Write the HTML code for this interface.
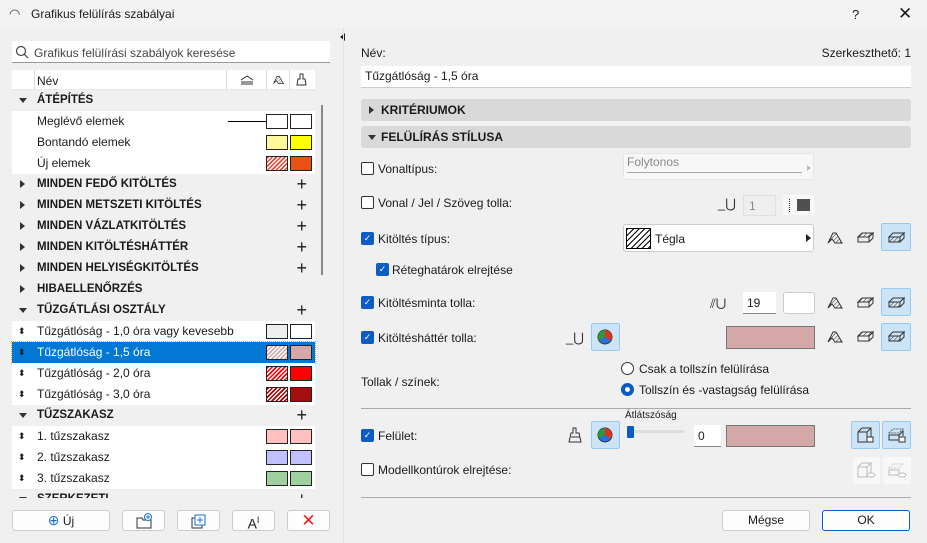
<!DOCTYPE html>
<html><head><meta charset="utf-8"><style>
*{box-sizing:border-box;margin:0;padding:0}
body{width:927px;height:543px;background:#f0f0f0;font-family:"Liberation Sans",sans-serif;font-size:12px;color:#1a1a1a;position:relative;overflow:hidden}
.a{position:absolute}
.tb{left:0;top:0;width:927px;height:28px;background:#f3f3f3}
.row{position:absolute;left:12px;width:303px;height:21px;line-height:21px}
.g{background:#f0f0f0;font-weight:bold;font-size:11.5px}
.i{background:#fff}
.sw{position:absolute;top:3px;width:22px;height:15px;border:1px solid #222}
.tri{position:absolute;left:7px;top:8px;width:0;height:0;border-left:4px solid transparent;border-right:4px solid transparent;border-top:5px solid #333}
.trr{position:absolute;left:8px;top:6px;border-top:4px solid transparent;border-bottom:4px solid transparent;border-left:5px solid #333}
.plus{position:absolute;right:8px;top:0;font-size:18px;font-weight:normal}
.ud{position:absolute;left:6px;top:0;font-size:9px}
.btn{position:absolute;background:#fdfdfd;border:1px solid #ccc;border-radius:3px;text-align:center;line-height:19px}
.cb{position:absolute;width:13px;height:13px;border-radius:2px}
.cb.on{background:#0b5cc4;color:#fff;font-size:9px;line-height:13px;text-align:center}
.cb.off{border:1px solid #333;background:#fff}
.bar{position:absolute;left:361px;width:550px;height:22px;background:#d9d9d9;border-radius:3px;font-weight:bold;line-height:22px;padding-left:20px}
.blue{position:absolute;background:#cce4f7;border:1px solid #99c9ef;border-radius:2px}
.ico{position:absolute;font-size:13px;color:#333}
.inp{position:absolute;background:#fff;border-bottom:1px solid #888;padding-left:4px;line-height:21px}
</style></head><body>
<svg width="0" height="0" style="position:absolute"><defs>
<pattern id="h" width="3" height="3" patternUnits="userSpaceOnUse" patternTransform="rotate(45)"><line x1="0" y1="0" x2="0" y2="3" stroke="#333" stroke-width="1"/></pattern>
<symbol id="i1" viewBox="0 0 18 14"><path d="M2 12 L7 2 L10 2 L16 12 L9 12 L6 8 Z" fill="url(#h)" stroke="#333"/></symbol>
<symbol id="i2" viewBox="0 0 18 14"><path d="M2 6 L6 2 H17 L13 6 Z" fill="url(#h)" stroke="#333"/><path d="M2 6 H13 V11 H2 Z M13 6 L17 2 V7 L13 11" fill="none" stroke="#333"/></symbol>
<symbol id="i3" viewBox="0 0 18 14"><path d="M2 6 L6 2 H17 L13 6 Z M13 6 L17 2 V7 L13 11" fill="none" stroke="#333"/><path d="M2 6 H13 V11 H2 Z" fill="url(#h)" stroke="#333"/></symbol>
</defs></svg>
<div class="a tb"></div>
<div class="a" style="left:9px;top:6px;font-size:13px;color:#444">◠</div>
<div class="a" style="left:31px;top:7px;font-size:12px">Grafikus felülírás szabályai</div>
<div class="a" style="left:852px;top:7px;font-size:13px">?</div>
<div class="a" style="left:898px;top:4px;font-size:17px">✕</div>

<div class="a" style="left:12px;top:41px;width:318px;height:22px;background:#fff;border-bottom:1px solid #999"></div>
<svg class="a" style="left:15px;top:45px" width="14" height="14"><circle cx="6" cy="6" r="4.5" fill="none" stroke="#444" stroke-width="1.2"/><line x1="9.3" y1="9.3" x2="13" y2="13" stroke="#444" stroke-width="1.2"/></svg>
<div class="a" style="left:34px;top:46px;color:#444">Grafikus felülírási szabályok keresése</div>

<div class="a" style="left:12px;top:70px;width:303px;height:20px;background:#fff;border-bottom:1px solid #e8e8e8"></div>
<div class="a" style="left:34px;top:70px;width:1px;height:20px;background:#ddd"></div>
<div class="a" style="left:226px;top:70px;width:1px;height:20px;background:#ddd"></div>
<div class="a" style="left:266px;top:70px;width:1px;height:20px;background:#ddd"></div>
<div class="a" style="left:289px;top:70px;width:1px;height:20px;background:#ddd"></div>
<div class="a" style="left:37px;top:74px">Név</div>
<svg class="a" style="left:240px;top:74px" width="14" height="12"><path d="M1 6 L7 2 L13 6 M1 8 H13 M1 10 H13" fill="none" stroke="#333"/></svg>
<svg class="a" style="left:272px;top:74px" width="13" height="12"><use href="#i1"/></svg>
<svg class="a" style="left:296px;top:73px" width="11" height="13"><path d="M4 1 H7 V6 H9 L10 12 H1 L2 6 H4 Z" fill="none" stroke="#333"/></svg>

<div class="row g" style="top:90px"><span class="tri"></span><span style="margin-left:25px">ÁTÉPÍTÉS</span></div>
<div class="row i" style="top:111px"><span style="margin-left:25px">Meglévő elemek</span><div class="a" style="left:216px;top:10px;width:46px;height:1px;background:#000"></div><div class="sw" style="left:254px;background:#fff"></div><div class="sw" style="left:278px;background:#fff"></div></div>
<div class="row i" style="top:132px"><span style="margin-left:25px">Bontandó elemek</span><div class="sw" style="left:254px;background:#fff59a"></div><div class="sw" style="left:278px;background:#ffff00"></div></div>
<div class="row i" style="top:153px"><span style="margin-left:25px">Új elemek</span><div class="sw" style="left:254px;background:repeating-linear-gradient(135deg,#e54a3a 0 1.5px,#fff 1.5px 3px)"></div><div class="sw" style="left:278px;background:#e85217"></div></div>
<div class="row g" style="top:174px"><span class="trr"></span><span style="margin-left:25px">MINDEN FEDŐ KITÖLTÉS</span><span class="plus">+</span></div>
<div class="row g" style="top:195px"><span class="trr"></span><span style="margin-left:25px">MINDEN METSZETI KITÖLTÉS</span><span class="plus">+</span></div>
<div class="row g" style="top:216px"><span class="trr"></span><span style="margin-left:25px">MINDEN VÁZLATKITÖLTÉS</span><span class="plus">+</span></div>
<div class="row g" style="top:237px"><span class="trr"></span><span style="margin-left:25px">MINDEN KITÖLTÉSHÁTTÉR</span><span class="plus">+</span></div>
<div class="row g" style="top:258px"><span class="trr"></span><span style="margin-left:25px">MINDEN HELYISÉGKITÖLTÉS</span><span class="plus">+</span></div>
<div class="row g" style="top:279px"><span class="trr"></span><span style="margin-left:25px">HIBAELLENŐRZÉS</span></div>
<div class="row g" style="top:300px"><span class="tri"></span><span style="margin-left:25px">TŰZGÁTLÁSI OSZTÁLY</span><span class="plus">+</span></div>
<div class="row i" style="top:321px"><span class="ud">⬍</span><span style="margin-left:25px">Tűzgátlóság - 1,0 óra vagy kevesebb</span><div class="sw" style="left:254px;background:#eee"></div><div class="sw" style="left:278px;background:#fff"></div></div>
<div class="row" style="top:342px;background:#0078d4;color:#fff;outline:1px dotted #e8a040"><span class="ud" style="color:#111">⬍</span><span style="margin-left:25px">Tűzgátlóság - 1,5 óra</span><div class="sw" style="left:254px;background:repeating-linear-gradient(135deg,#d4a9a9 0 1.5px,#fff 1.5px 3px)"></div><div class="sw" style="left:278px;background:#d4a8a8"></div></div>
<div class="row i" style="top:363px"><span class="ud">⬍</span><span style="margin-left:25px">Tűzgátlóság - 2,0 óra</span><div class="sw" style="left:254px;background:repeating-linear-gradient(135deg,#f00 0 1.5px,#fff 1.5px 3px)"></div><div class="sw" style="left:278px;background:#f00"></div></div>
<div class="row i" style="top:384px"><span class="ud">⬍</span><span style="margin-left:25px">Tűzgátlóság - 3,0 óra</span><div class="sw" style="left:254px;background:repeating-linear-gradient(135deg,#a00 0 1.5px,#fff 1.5px 3px)"></div><div class="sw" style="left:278px;background:#a30f0f"></div></div>
<div class="row g" style="top:405px"><span class="tri"></span><span style="margin-left:25px">TŰZSZAKASZ</span><span class="plus">+</span></div>
<div class="row i" style="top:426px"><span class="ud">⬍</span><span style="margin-left:25px">1. tűzszakasz</span><div class="sw" style="left:254px;background:#ffc0c0"></div><div class="sw" style="left:278px;background:#ffc0c0"></div></div>
<div class="row i" style="top:447px"><span class="ud">⬍</span><span style="margin-left:25px">2. tűzszakasz</span><div class="sw" style="left:254px;background:#c0c0ff"></div><div class="sw" style="left:278px;background:#c0c0ff"></div></div>
<div class="row i" style="top:468px"><span class="ud">⬍</span><span style="margin-left:25px">3. tűzszakasz</span><div class="sw" style="left:254px;background:#a0d0a0"></div><div class="sw" style="left:278px;background:#a0d0a0"></div></div>
<div class="row g" style="top:489px;height:9px;overflow:hidden"><span class="tri"></span><span style="margin-left:25px">SZERKEZETI</span><span class="plus">+</span></div>
<div class="a" style="left:321px;top:105px;width:2px;height:170px;background:#888"></div>

<div class="btn" style="left:12px;top:510px;width:98px;height:21px"><span style="color:#1a6fd4;font-size:14px">⊕</span> Új</div>
<div class="btn" style="left:122px;top:510px;width:43px;height:21px"><svg width="18" height="16" style="margin-top:2px"><path d="M2 5 H7 L8 7 H16 V15 H2 Z" fill="none" stroke="#333"/><circle cx="13" cy="4" r="3.5" fill="#fff" stroke="#1a6fd4"/><path d="M13 2 V6 M11 4 H15" stroke="#1a6fd4"/></svg></div>
<div class="btn" style="left:177px;top:510px;width:43px;height:21px"><svg width="18" height="16" style="margin-top:2px"><rect x="2" y="5" width="10" height="10" fill="none" stroke="#333"/><rect x="5" y="2" width="10" height="10" fill="#fff" stroke="#1a6fd4"/><path d="M10 4 V10 M7 7 H13" stroke="#1a6fd4"/></svg></div>
<div class="btn" style="left:232px;top:510px;width:43px;height:21px;font-size:14px">A<sup style="font-size:9px">I</sup></div>
<div class="btn" style="left:287px;top:510px;width:43px;height:21px;color:#e82020;font-size:17px">✕</div>

<div class="a" style="left:340px;top:33px;border-top:4px solid transparent;border-bottom:4px solid transparent;border-right:5px solid #222"></div>
<div class="a" style="left:343px;top:28px;width:1px;height:515px;background:#e4e4e4"></div>

<div class="a" style="left:361px;top:46px">Név:</div>
<div class="a" style="left:800px;top:46px;width:111px;text-align:right">Szerkeszthető: 1</div>
<div class="inp" style="left:361px;top:66px;width:550px;height:22px;border-bottom-color:#ccc">Tűzgátlóság - 1,5 óra</div>
<div class="bar" style="top:99px"><span class="trr" style="left:8px;top:7px"></span>KRITÉRIUMOK</div>
<div class="bar" style="top:126px"><span class="tri" style="left:7px;top:9px"></span>FELÜLÍRÁS STÍLUSA</div>

<div class="cb off" style="left:361px;top:162px"></div><div class="a" style="left:378px;top:162px">Vonaltípus:</div>
<div class="a" style="left:623px;top:153px;width:191px;height:27px;background:#f7f7f7;border:1px solid #e6e6e6;border-radius:3px;color:#888;padding:1px 3px">Folytonos<div style="border-top:1px solid #aaa;margin-top:3px;width:175px"></div></div>
<div class="a" style="left:807px;top:165px;border-top:3px solid transparent;border-bottom:3px solid transparent;border-left:4px solid #bbb"></div>

<div class="cb off" style="left:361px;top:196px"></div><div class="a" style="left:378px;top:196px">Vonal / Jel / Szöveg tolla:</div>
<div class="ico" style="left:718px;top:196px">_⋃</div>
<div class="a" style="left:743px;top:195px;width:33px;height:21px;background:#eee;border:1px solid #e0e0e0;color:#888;padding:3px 5px">1</div>
<div class="a" style="left:783px;top:195px;width:31px;height:20px;background:#f9f9f9;border-radius:3px"><div style="position:absolute;left:6px;top:4px;width:1px;height:13px;border-left:1px dotted #333"></div><div style="position:absolute;left:14px;top:4px;width:13px;height:12px;background:#333;opacity:.85"></div></div>

<div class="cb on" style="left:361px;top:232px">✓</div><div class="a" style="left:378px;top:232px">Kitöltés típus:</div>
<div class="a" style="left:623px;top:224px;width:191px;height:28px;background:#fff;border:1px solid #ccc;border-radius:3px"></div>
<div class="a" style="left:626px;top:228px;width:25px;height:21px;border:1px solid #000;background:repeating-linear-gradient(135deg,#000 0 1px,#fff 1px 4px)"></div>
<div class="a" style="left:655px;top:232px">Tégla</div>
<div class="a" style="left:806px;top:234px;border-top:4px solid transparent;border-bottom:4px solid transparent;border-left:5px solid #222"></div>
<svg class="a" style="left:826px;top:231px" width="18" height="14"><use href="#i1"/></svg>
<svg class="a" style="left:856px;top:231px" width="18" height="14"><use href="#i2"/></svg>
<div class="blue" style="left:881px;top:223px;width:30px;height:28px"></div>
<svg class="a" style="left:887px;top:231px" width="18" height="14"><use href="#i3"/></svg>

<div class="cb on" style="left:376px;top:263px">✓</div><div class="a" style="left:392px;top:263px">Réteghatárok elrejtése</div>

<div class="cb on" style="left:361px;top:296px">✓</div><div class="a" style="left:378px;top:296px">Kitöltésminta tolla:</div>
<div class="ico" style="left:710px;top:296px">⫽⋃</div>
<div class="a" style="left:743px;top:292px;width:33px;height:22px;background:#fff;border-bottom:1px solid #888;padding:4px 4px">19</div>
<div class="a" style="left:783px;top:292px;width:32px;height:22px;background:#fff;border:1px solid #ccc;border-radius:3px"></div>
<svg class="a" style="left:826px;top:296px" width="18" height="14"><use href="#i1"/></svg>
<svg class="a" style="left:856px;top:296px" width="18" height="14"><use href="#i2"/></svg>
<div class="blue" style="left:881px;top:288px;width:30px;height:28px"></div>
<svg class="a" style="left:887px;top:296px" width="18" height="14"><use href="#i3"/></svg>

<div class="cb on" style="left:361px;top:331px">✓</div><div class="a" style="left:378px;top:331px">Kitöltésháttér tolla:</div>
<div class="ico" style="left:566px;top:330px">_⋃</div>
<div class="blue" style="left:591px;top:323px;width:29px;height:28px"></div>
<svg class="a" style="left:597px;top:329px" width="16" height="16"><circle cx="8" cy="8" r="7" fill="#2a6ee0" stroke="#333"/><path d="M8 8V1A7 7 0 0 1 14 11.5Z" fill="#e03020"/><path d="M8 8V1A7 7 0 0 0 2 11.5Z" fill="#2a9a3a"/></svg>
<div class="a" style="left:726px;top:326px;width:89px;height:23px;background:#d4a8a8;border:1px solid #777"></div>
<svg class="a" style="left:826px;top:330px" width="18" height="14"><use href="#i1"/></svg>
<svg class="a" style="left:856px;top:330px" width="18" height="14"><use href="#i2"/></svg>
<div class="blue" style="left:881px;top:323px;width:30px;height:28px"></div>
<svg class="a" style="left:887px;top:330px" width="18" height="14"><use href="#i3"/></svg>

<div class="a" style="left:361px;top:375px">Tollak / színek:</div>
<div class="a" style="left:621px;top:362px;width:13px;height:13px;border:1px solid #333;border-radius:50%;background:#fff"></div>
<div class="a" style="left:639px;top:362px">Csak a tollszín felülírása</div>
<div class="a" style="left:621px;top:383px;width:13px;height:13px;border:4px solid #0b5cc4;border-radius:50%;background:#fff"></div>
<div class="a" style="left:639px;top:383px">Tollszín és -vastagság felülírása</div>

<div class="a" style="left:361px;top:408px;width:550px;height:1px;background:#aaa"></div>
<div class="a" style="left:625px;top:410px;font-size:10px">Átlátszóság</div>
<div class="cb on" style="left:361px;top:429px">✓</div><div class="a" style="left:378px;top:429px">Felület:</div>
<svg class="a" style="left:567px;top:427px" width="16" height="16"><path d="M6 1 H9 V6 H12 L14 15 H2 L4 6 H6 Z M4 10 H13" fill="none" stroke="#333"/></svg>
<div class="blue" style="left:591px;top:421px;width:29px;height:28px"></div>
<svg class="a" style="left:597px;top:427px" width="16" height="16"><circle cx="8" cy="8" r="7" fill="#2a6ee0" stroke="#333"/><path d="M8 8V1A7 7 0 0 1 14 11.5Z" fill="#e03020"/><path d="M8 8V1A7 7 0 0 0 2 11.5Z" fill="#2a9a3a"/></svg>
<div class="a" style="left:628px;top:430px;width:56px;height:3px;background:#ddd"></div>
<div class="a" style="left:627px;top:426px;width:7px;height:12px;background:#0b5cc4;border-radius:1px"></div>
<div class="a" style="left:694px;top:425px;width:27px;height:22px;background:#fff;border-bottom:1px solid #888;padding:4px">0</div>
<div class="a" style="left:726px;top:425px;width:89px;height:22px;background:#d4a8a8;border:1px solid #777"></div>
<div class="blue" style="left:851px;top:421px;width:29px;height:28px"></div><div class="blue" style="left:882px;top:421px;width:29px;height:28px"></div>
<svg class="a" style="left:856px;top:426px" width="20" height="18"><path d="M2 6 L6 2 H15 V12 L11 16 H2 Z M2 6 H11 V16 M11 6 L15 2" fill="none" stroke="#333"/><rect x="11" y="11" width="6" height="5" fill="#fff" stroke="#333"/></svg>
<svg class="a" style="left:887px;top:426px" width="20" height="18"><path d="M2 7 L6 3 H16 L12 7 Z" fill="none" stroke="#666" stroke-dasharray="2 1"/><path d="M2 9 H12 V14 H2 Z M12 9 L16 5 V10" fill="none" stroke="#333"/><rect x="12" y="11" width="6" height="5" fill="#fff" stroke="#333"/></svg>

<div class="cb off" style="left:361px;top:463px"></div><div class="a" style="left:378px;top:463px">Modellkontúrok elrejtése:</div>
<div class="a" style="left:853px;top:457px;width:27px;height:27px;background:#f8f8f8;border-radius:3px"></div><div class="a" style="left:883px;top:457px;width:28px;height:27px;background:#f8f8f8;border-radius:3px"></div>
<svg class="a" style="left:856px;top:461px" width="20" height="18"><path d="M2 6 L6 2 H15 V12 L11 16 H2 Z M2 6 H11 V16 M11 6 L15 2" fill="none" stroke="#bbb"/><ellipse cx="15" cy="14" rx="4" ry="2" fill="#fff" stroke="#bbb"/></svg>
<svg class="a" style="left:887px;top:461px" width="20" height="18"><path d="M2 7 L6 3 H16 L12 7 Z" fill="none" stroke="#ccc" stroke-dasharray="2 1"/><path d="M2 9 H12 V14 H2 Z" fill="none" stroke="#bbb"/><ellipse cx="15" cy="14" rx="4" ry="2" fill="#fff" stroke="#bbb"/></svg>

<div class="a" style="left:361px;top:497px;width:550px;height:1px;background:#aaa"></div>
<div class="btn" style="left:722px;top:510px;width:88px;height:21px">Mégse</div>
<div class="btn" style="left:822px;top:510px;width:88px;height:21px;border-color:#0b5cc4">OK</div>
</body></html>
